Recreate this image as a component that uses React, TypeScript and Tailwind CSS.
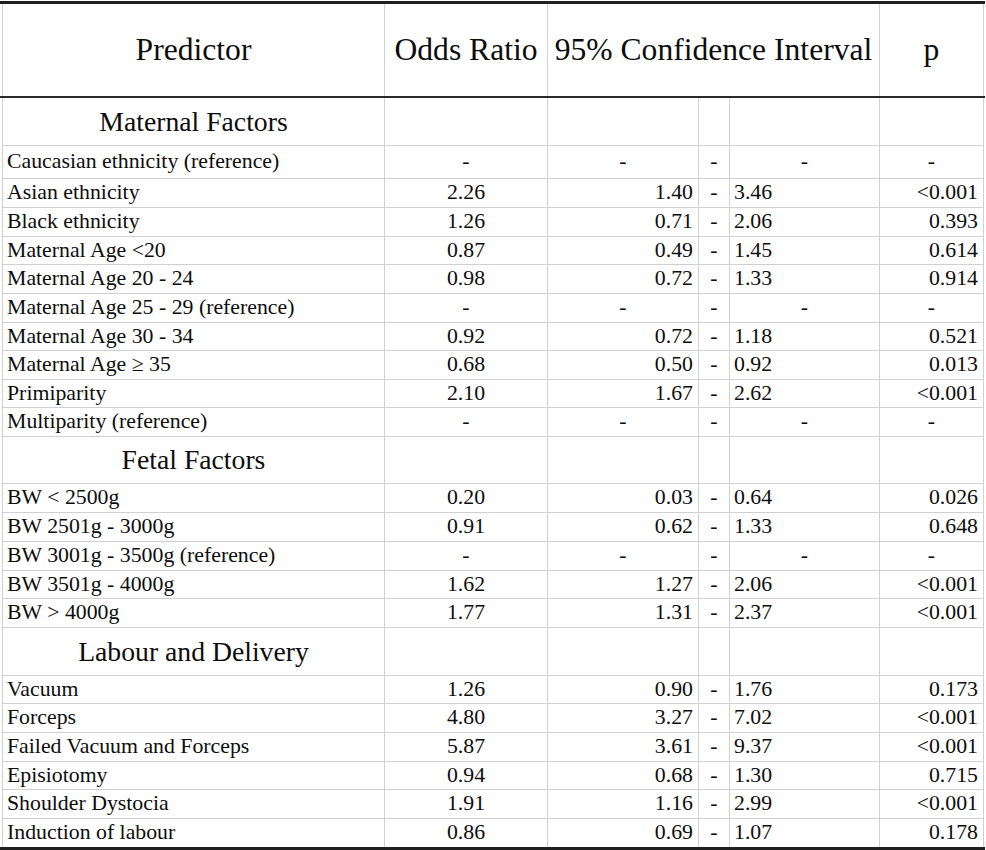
import React from "react";

type Row =
  | { kind: "section"; label: string; h: string }
  | { kind: "ref"; label: string; h: string }
  | { kind: "data"; label: string; or: string; lo: string; hi: string; p: string; h: string };

const rows: Row[] = [
  { kind: "section", label: "Maternal Factors", h: "h-[48px]" },
  { kind: "ref", label: "Caucasian ethnicity (reference)", h: "h-[33px]" },
  { kind: "data", label: "Asian ethnicity", or: "2.26", lo: "1.40", hi: "3.46", p: "<0.001", h: "h-[29px]" },
  { kind: "data", label: "Black ethnicity", or: "1.26", lo: "0.71", hi: "2.06", p: "0.393", h: "h-[29px]" },
  { kind: "data", label: "Maternal Age <20", or: "0.87", lo: "0.49", hi: "1.45", p: "0.614", h: "h-[28px]" },
  { kind: "data", label: "Maternal Age 20 - 24", or: "0.98", lo: "0.72", hi: "1.33", p: "0.914", h: "h-[29px]" },
  { kind: "ref", label: "Maternal Age 25 - 29 (reference)", h: "h-[29px]" },
  { kind: "data", label: "Maternal Age 30 - 34", or: "0.92", lo: "0.72", hi: "1.18", p: "0.521", h: "h-[28px]" },
  { kind: "data", label: "Maternal Age \u2265 35", or: "0.68", lo: "0.50", hi: "0.92", p: "0.013", h: "h-[29px]" },
  { kind: "data", label: "Primiparity", or: "2.10", lo: "1.67", hi: "2.62", p: "<0.001", h: "h-[28px]" },
  { kind: "ref", label: "Multiparity (reference)", h: "h-[29px]" },
  { kind: "section", label: "Fetal Factors", h: "h-[47px]" },
  { kind: "data", label: "BW < 2500g", or: "0.20", lo: "0.03", hi: "0.64", p: "0.026", h: "h-[29px]" },
  { kind: "data", label: "BW 2501g - 3000g", or: "0.91", lo: "0.62", hi: "1.33", p: "0.648", h: "h-[29px]" },
  { kind: "ref", label: "BW 3001g - 3500g (reference)", h: "h-[29px]" },
  { kind: "data", label: "BW 3501g - 4000g", or: "1.62", lo: "1.27", hi: "2.06", p: "<0.001", h: "h-[28px]" },
  { kind: "data", label: "BW > 4000g", or: "1.77", lo: "1.31", hi: "2.37", p: "<0.001", h: "h-[29px]" },
  { kind: "section", label: "Labour and Delivery", h: "h-[48px]" },
  { kind: "data", label: "Vacuum", or: "1.26", lo: "0.90", hi: "1.76", p: "0.173", h: "h-[28px]" },
  { kind: "data", label: "Forceps", or: "4.80", lo: "3.27", hi: "7.02", p: "<0.001", h: "h-[29px]" },
  { kind: "data", label: "Failed Vacuum and Forceps", or: "5.87", lo: "3.61", hi: "9.37", p: "<0.001", h: "h-[29px]" },
  { kind: "data", label: "Episiotomy", or: "0.94", lo: "0.68", hi: "1.30", p: "0.715", h: "h-[28px]" },
  { kind: "data", label: "Shoulder Dystocia", or: "1.91", lo: "1.16", hi: "2.99", p: "<0.001", h: "h-[29px]" },
  { kind: "data", label: "Induction of labour", or: "0.86", lo: "0.69", hi: "1.07", p: "0.178", h: "h-[28px]" },
];

const line = "border-[#d0d0d0]";

function TableRow({ row, last }: { row: Row; last: boolean }) {
  const rowCls = `flex ${row.h} ${last ? "" : `border-b ${line}`}`;
  const cell = `flex items-center h-full border-r ${line}`;
  if (row.kind === "section") {
    return (
      <div className={rowCls}>
        <div className={`${cell} w-[382px] justify-center text-[27.7px]`}>{row.label}</div>
        <div className={`${cell} w-[163px]`} />
        <div className={`${cell} w-[151px]`} />
        <div className={`${cell} w-[31px]`} />
        <div className={`${cell} w-[150px]`} />
        <div className={`${cell} w-[104px]`} />
      </div>
    );
  }
  if (row.kind === "ref") {
    return (
      <div className={`${rowCls} text-[21.8px]`}>
        <div className={`${cell} w-[382px] pl-[4px]`}>{row.label}</div>
        <div className={`${cell} w-[163px] justify-center`}>-</div>
        <div className={`${cell} w-[151px] justify-center`}>-</div>
        <div className={`${cell} w-[31px] justify-center`}>-</div>
        <div className={`${cell} w-[150px] justify-center`}>-</div>
        <div className={`${cell} w-[104px] justify-center`}>-</div>
      </div>
    );
  }
  return (
    <div className={`${rowCls} text-[21.8px]`}>
      <div className={`${cell} w-[382px] pl-[4px]`}>{row.label}</div>
      <div className={`${cell} w-[163px] justify-center`}>{row.or}</div>
      <div className={`${cell} w-[151px] justify-end pr-[5px]`}>{row.lo}</div>
      <div className={`${cell} w-[31px] justify-center`}>-</div>
      <div className={`${cell} w-[150px] justify-start pl-[4px]`}>{row.hi}</div>
      <div className={`${cell} w-[104px] justify-end pr-[5px]`}>{row.p}</div>
    </div>
  );
}

export default function App() {
  return (
    <div className="w-[986px] h-[850px] bg-white pt-[1px] text-[#0d0d0d] font-['Liberation_Serif','Times_New_Roman',serif] leading-none whitespace-nowrap">
      <div className="w-[985px] h-[3px] bg-[#1f1f1f]" />
      <div className={`ml-[2px] w-[982px] border-l ${line}`}>
        <div className="flex h-[92px] text-[31.6px]">
          <div className={`flex items-center justify-center w-[382px] border-r ${line}`}>Predictor</div>
          <div className={`flex items-center justify-center w-[163px] border-r ${line}`}>Odds Ratio</div>
          <div className={`flex items-center justify-center w-[332px] border-r ${line}`}>95% Confidence Interval</div>
          <div className={`flex items-center justify-center w-[104px] border-r ${line}`}>p</div>
        </div>
      </div>
      <div className="w-[985px] h-[2px] bg-[#2a2a2a]" />
      <div className={`ml-[2px] w-[982px] border-l ${line}`}>
        {rows.map((r, i) => (
          <TableRow key={i} row={r} last={i === rows.length - 1} />
        ))}
      </div>
      <div className="w-[985px] h-[3px] bg-[#1f1f1f]" />
    </div>
  );
}
